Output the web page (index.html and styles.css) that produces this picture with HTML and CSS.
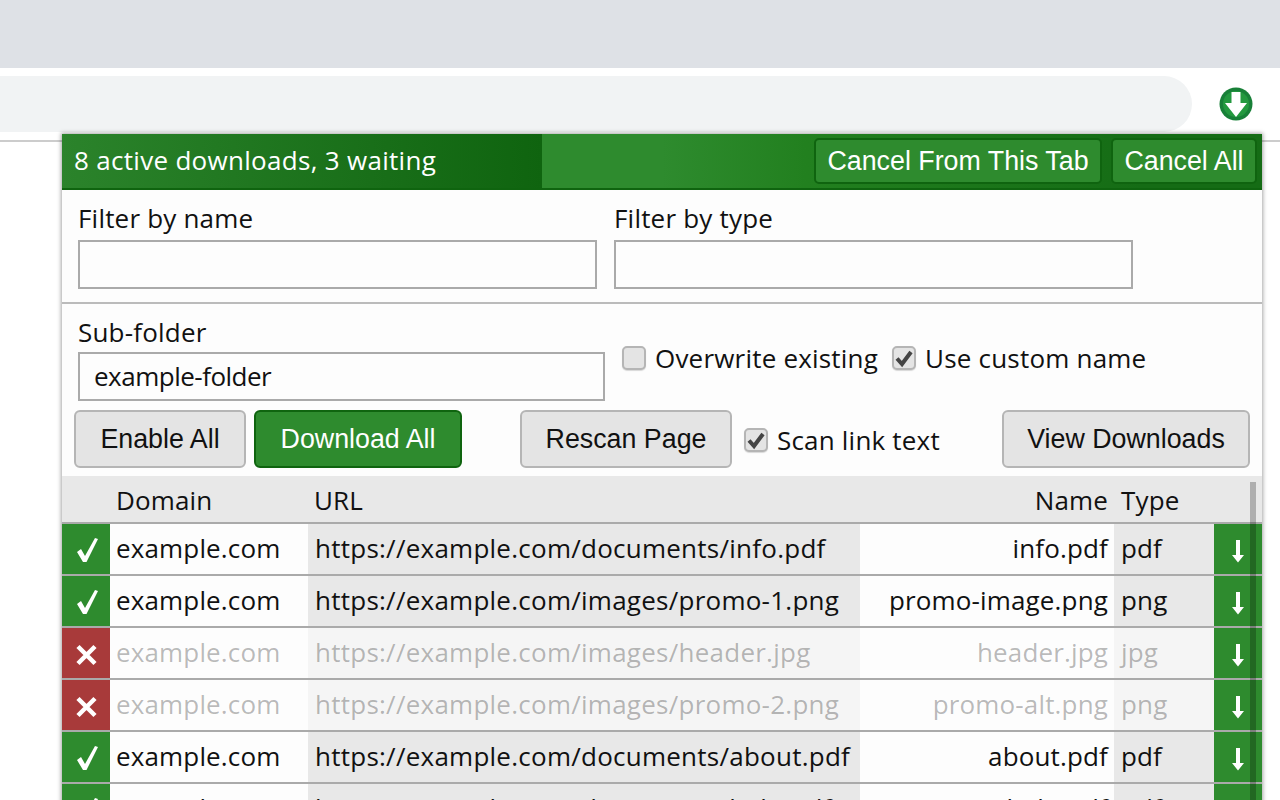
FILE: index.html
```html
<!DOCTYPE html>
<html lang="en">
<head>
<meta charset="utf-8">
<title>Downloads</title>
<link rel="stylesheet" href="styles.css">
</head>
<body>
<div class="tabstrip"></div>
<div class="toolbar">
  <div class="omnibox"></div>
  <svg class="ext-icon" viewBox="0 0 34 34" width="34" height="34"><circle cx="17" cy="17" r="16.500" fill="#188038"/><circle cx="17" cy="17" r="13" fill="#23993f"/><path d="M12.500 5H21.500V16H28L17 30L6 16H12.500Z" fill="#fff"/></svg>
</div>
<div class="popup">
  <div class="head">
    <div class="status">8 active downloads, 3 waiting</div>
    <div class="head-actions">
      <button class="hbtn hbtn-wide">Cancel From This Tab</button>
      <button class="hbtn hbtn-all">Cancel All</button>
    </div>
  </div>
  <div class="filters">
    <div class="field field-a"><label class="lbl">Filter by name</label><input class="inp" type="text"></div>
    <div class="field field-b"><label class="lbl">Filter by type</label><input class="inp" type="text"></div>
  </div>
  <div class="options">
    <div class="field field-c"><label class="lbl">Sub-folder</label><input class="inp inp-val" type="text" value="example-folder"></div>
    <label class="chk chk-over"><span class="box"></span>Overwrite existing</label>
    <label class="chk chk-name"><span class="box"><svg viewBox="0 0 24 24" width="24" height="24"><path d="M5 12.500L10 18L19 6" fill="none" stroke="#444" stroke-width="4"/></svg></span>Use custom name</label>
  </div>
  <div class="actions">
    <button class="btn b-enable">Enable All</button>
    <button class="btn btn-green b-dl">Download All</button>
    <button class="btn b-rescan">Rescan Page</button>
    <label class="chk chk-scan"><span class="box"><svg viewBox="0 0 24 24" width="24" height="24"><path d="M5 12.500L10 18L19 6" fill="none" stroke="#444" stroke-width="4"/></svg></span>Scan link text</label>
    <button class="btn b-view">View Downloads</button>
  </div>
  <div class="table">
    <div class="row thead"><div></div><div class="c">Domain</div><div class="c">URL</div><div class="c r">Name</div><div class="c t">Type</div><div></div></div>

    <div class="row"><div class="st ok"><svg viewBox="0 0 48 50" width="48" height="50"><path d="M15 28L19 25L23 32L33 14L36 15L24.500 38H21Z" fill="#fff"/></svg></div><div class="c">example.com</div><div class="c g u">https://example.com/documents/info.pdf</div><div class="c r">info.pdf</div><div class="c t g">pdf</div><div class="dl"><svg viewBox="0 0 48 50" width="48" height="50"><path d="M22 16H26V31H30L24 38.500L18 31H22Z" fill="#fff"/></svg></div></div>

    <div class="row"><div class="st ok"><svg viewBox="0 0 48 50" width="48" height="50"><path d="M15 28L19 25L23 32L33 14L36 15L24.500 38H21Z" fill="#fff"/></svg></div><div class="c">example.com</div><div class="c g u">https://example.com/images/promo-1.png</div><div class="c r">promo-image.png</div><div class="c t g">png</div><div class="dl"><svg viewBox="0 0 48 50" width="48" height="50"><path d="M22 16H26V31H30L24 38.500L18 31H22Z" fill="#fff"/></svg></div></div>

    <div class="row off"><div class="st no"><svg viewBox="0 0 48 50" width="48" height="50"><path d="M16 18.500L33 35.500M33 18.500L16 35.500" fill="none" stroke="#fff" stroke-width="4.500"/></svg></div><div class="c">example.com</div><div class="c g u">https://example.com/images/header.jpg</div><div class="c r">header.jpg</div><div class="c t g">jpg</div><div class="dl"><svg viewBox="0 0 48 50" width="48" height="50"><path d="M22 16H26V31H30L24 38.500L18 31H22Z" fill="#fff"/></svg></div></div>

    <div class="row off"><div class="st no"><svg viewBox="0 0 48 50" width="48" height="50"><path d="M16 18.500L33 35.500M33 18.500L16 35.500" fill="none" stroke="#fff" stroke-width="4.500"/></svg></div><div class="c">example.com</div><div class="c g u">https://example.com/images/promo-2.png</div><div class="c r">promo-alt.png</div><div class="c t g">png</div><div class="dl"><svg viewBox="0 0 48 50" width="48" height="50"><path d="M22 16H26V31H30L24 38.500L18 31H22Z" fill="#fff"/></svg></div></div>

    <div class="row"><div class="st ok"><svg viewBox="0 0 48 50" width="48" height="50"><path d="M15 28L19 25L23 32L33 14L36 15L24.500 38H21Z" fill="#fff"/></svg></div><div class="c">example.com</div><div class="c g u">https://example.com/documents/about.pdf</div><div class="c r">about.pdf</div><div class="c t g">pdf</div><div class="dl"><svg viewBox="0 0 48 50" width="48" height="50"><path d="M22 16H26V31H30L24 38.500L18 31H22Z" fill="#fff"/></svg></div></div>

    <div class="row"><div class="st ok"><svg viewBox="0 0 48 50" width="48" height="50"><path d="M15 28L19 25L23 32L33 14L36 15L24.500 38H21Z" fill="#fff"/></svg></div><div class="c">example.com</div><div class="c g u">https://example.com/documents/help.pdf</div><div class="c r">help.pdf</div><div class="c t g">pdf</div><div class="dl"><svg viewBox="0 0 48 50" width="48" height="50"><path d="M22 16H26V31H30L24 38.500L18 31H22Z" fill="#fff"/></svg></div></div>
    <div class="scrollbar"></div>
  </div>
</div>
</body>
</html>
```
FILE: styles.css
```css
* { box-sizing: border-box; }
html, body { margin: 0; height: 800px; overflow: hidden; background: #fff; }
body { font-family: "Open Sans", sans-serif; color: #111; position: relative; }
.tabstrip { height: 68px; background: #dee1e6; }
.toolbar { height: 74px; background: #fff; border-bottom: 2px solid #ccc; padding-top: 8px; display: flex; align-items: flex-start; }
.omnibox { width: 1192px; height: 56px; background: #f1f3f4; border-radius: 0 28px 28px 0; }
.ext-icon { margin: 11px 0 0 27px; }
.popup { position: absolute; left: 62px; top: 134px; width: 1200px; height: 680px; background: #fdfdfd; box-shadow: 0 0 4px 1px rgba(0,0,0,.35); font-size: 26px; letter-spacing: .2px; }
.head { height: 56px; display: flex; justify-content: space-between; border-bottom: 2px solid #0f640f; background: linear-gradient(90deg, #2e8b2e 50%, #22801f 62%, #156c15 90%); }
.status { width: 480px; height: 54px; padding-left: 12px; line-height: 52px; letter-spacing: .3px; color: #fff; background: linear-gradient(90deg, #2b832b, #0f640f); }
.head-actions { display: flex; gap: 9px; padding: 4px 5px 0 0; }
button { font-family: "Liberation Sans", sans-serif; font-size: 26.8px; letter-spacing: 0; cursor: pointer; }
.hbtn { height: 46px; color: #fff; background: #2e8b2e; border: 2px solid #0f640f; border-radius: 5px; padding: 0; }
.hbtn-wide { width: 288px; }
.hbtn-all { width: 146px; }
.filters { height: 114px; border-bottom: 2px solid #bbb; display: flex; padding-left: 16px; gap: 17px; }
.field { display: flex; flex-direction: column; }
.lbl { display: block; height: 50px; line-height: 56px; }
.inp { height: 49px; background: #fdfdfd; border: 2px solid #aaa; padding: 0 14px; font: inherit; letter-spacing: -.5px; color: #111; }
.field-a .inp, .field-b .inp { width: 519px; }
.field-c { padding-left: 16px; }
.field-c .lbl { height: 48px; line-height: 56px; }
.field-c .inp { width: 527px; line-height: 44px; padding-bottom: 2px; }
.options { height: 106px; display: flex; align-items: flex-start; }
.chk { display: flex; align-items: center; gap: 9px; }
.box { width: 24px; height: 24px; flex: none; background: #e4e4e4; border: 2px solid #b5b5b5; border-radius: 5px; display: block; position: relative; box-shadow: 0 1px 1px rgba(0,0,0,.15); }
.box svg { position: absolute; left: -2px; top: -2px; }
.chk-over { margin: 36px 0 0 17px; }
.chk-name { margin: 36px 0 0 14px; }
.actions { height: 66px; display: flex; align-items: flex-start; padding-left: 12px; }
.btn { height: 58px; background: #e4e4e4; color: #111; border: 2px solid #b5b5b5; border-radius: 6px; padding: 0; }
.btn-green { background: #2e8b2e; border-color: #0f640f; color: #fff; }
.b-enable { width: 172px; }
.b-dl { width: 208px; margin-left: 8px; }
.b-rescan { width: 212px; margin-left: 58px; }
.chk-scan { margin: 12px 0 0 12px; }
.b-view { width: 248px; margin-left: auto; margin-right: 12px; }
.table { position: relative; }
.row { display: grid; grid-template-columns: 48px 198px 552px 254px 100px 48px; height: 52px; border-bottom: 2px solid #aaa; }
.thead { height: 48px; background: #e8e8e8; }
.c { padding: 0 6px; line-height: 48px; white-space: nowrap; overflow: hidden; letter-spacing: .15px; }
.u { padding-left: 7px; letter-spacing: .25px; }
.r { text-align: right; }
.t { padding-left: 7px; }
.g { background: #e8e8e8; }
.st, .dl { background: #2e8b2e; }
.no { background: #a83a3a; }
.st svg, .dl svg { display: block; }
.off .c { color: rgba(17,17,17,.3); }
.off .g { background: #f5f5f5; }
.scrollbar { position: absolute; left: 1188px; top: 6px; width: 6px; height: 340px; background: rgba(0,0,0,.25); }
```
